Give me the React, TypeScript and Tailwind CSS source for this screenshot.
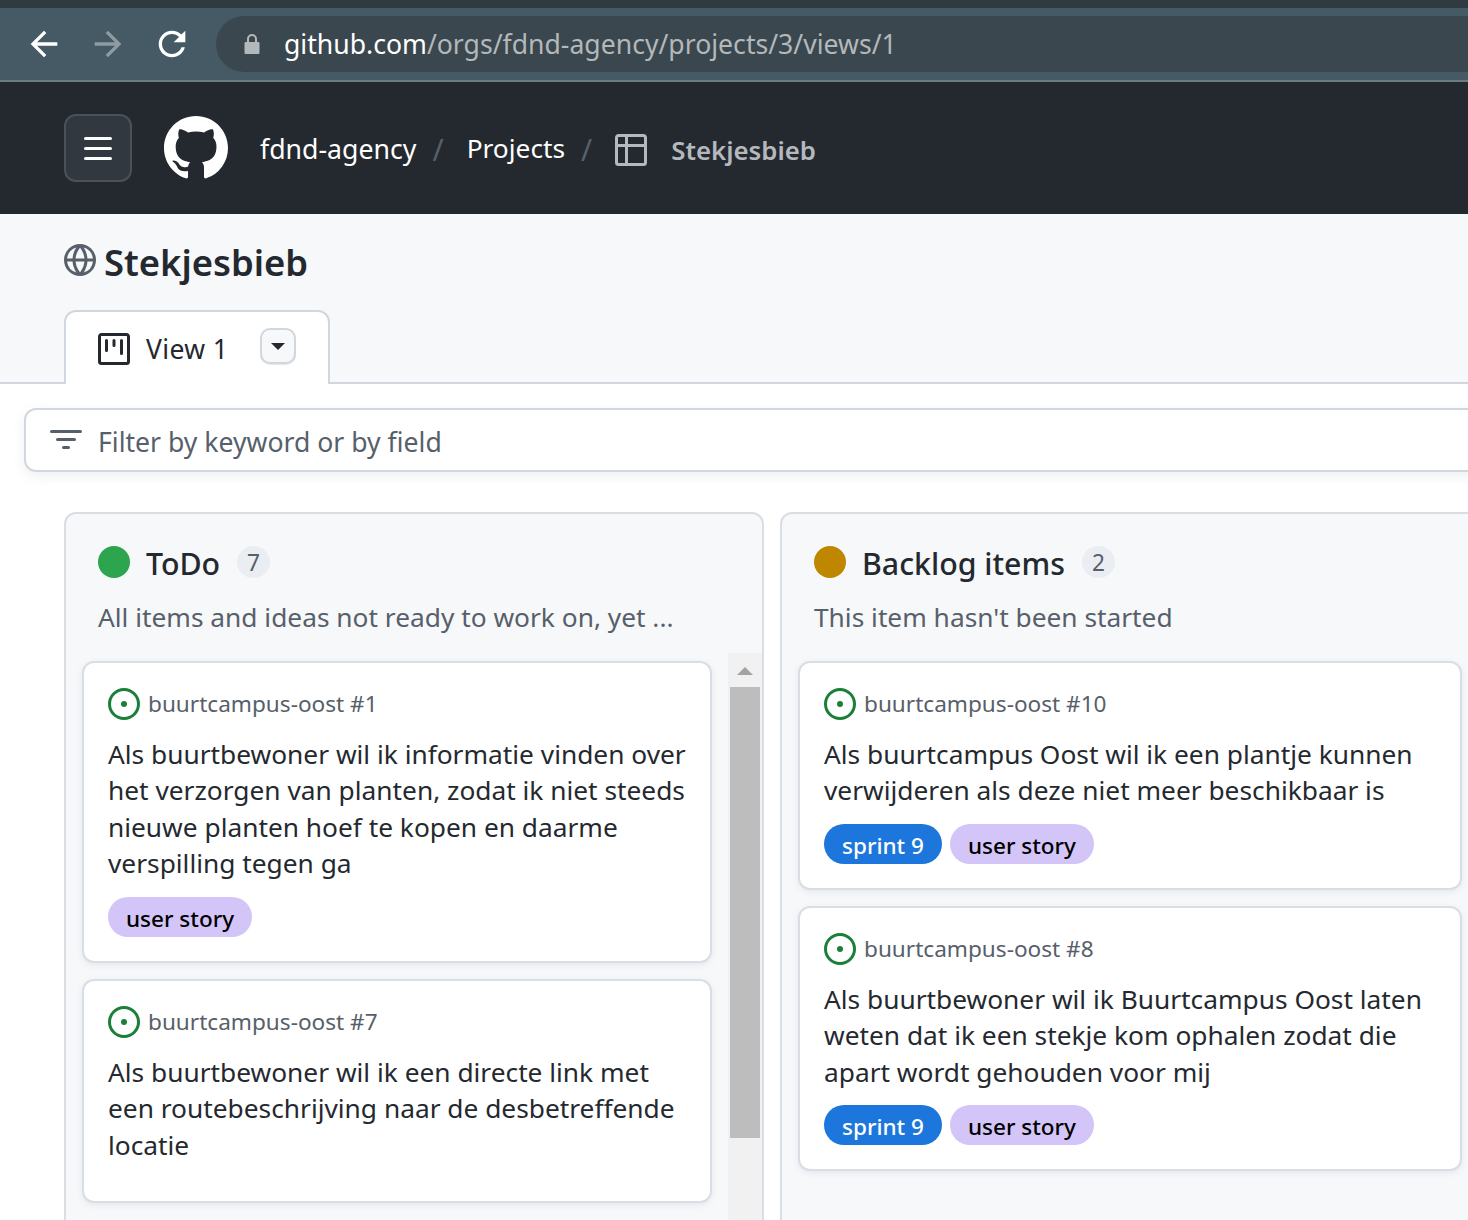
import React from 'react';

const FONT = "font-['Noto_Sans','Open_Sans',sans-serif]";

const GithubMark = () => (
    <svg viewBox="0 0 16 16" className="w-16 h-16" fill="#ffffff">
        <path d="M8 0C3.58 0 0 3.58 0 8c0 3.54 2.29 6.53 5.47 7.59.4.07.55-.17.55-.38 0-.19-.01-.82-.01-1.49-2.01.37-2.53-.49-2.69-.94-.09-.23-.48-.94-.82-1.13-.28-.15-.68-.52-.01-.53.63-.01 1.08.58 1.23.82.72 1.21 1.87.87 2.33.66.07-.52.28-.87.51-1.07-1.78-.2-3.64-.89-3.64-3.95 0-.87.31-1.59.82-2.15-.08-.2-.36-1.02.08-2.12 0 0 .67-.21 2.2.82.64-.18 1.32-.27 2-.27.68 0 1.36.09 2 .27 1.53-1.04 2.2-.82 2.2-.82.44 1.1.16 1.92.08 2.12.51.56.82 1.27.82 2.15 0 3.07-1.87 3.75-3.65 3.95.29.25.54.73.54 1.48 0 1.07-.01 1.93-.01 2.2 0 .21.15.46.55.38A8.013 8.013 0 0016 8c0-4.42-3.58-8-8-8z" />
    </svg>
);

const BackIcon = () => (
    <svg viewBox="0 0 24 24" className="w-10 h-10" fill="#ffffff">
        <path d="M20 11H7.83l5.59-5.59L12 4l-8 8 8 8 1.41-1.41L7.83 13H20v-2z" />
    </svg>
);

const ForwardIcon = () => (
    <svg viewBox="0 0 24 24" className="w-10 h-10" fill="#8f9ca3">
        <path d="M12 4l-1.41 1.41L16.17 11H4v2h12.17l-5.58 5.59L12 20l8-8z" />
    </svg>
);

const ReloadIcon = () => (
    <svg viewBox="0 0 24 24" className="w-10 h-10" fill="#ffffff">
        <path d="M17.65 6.35C16.2 4.9 14.21 4 12 4c-4.42 0-7.99 3.58-7.99 8s3.57 8 7.99 8c3.73 0 6.84-2.55 7.73-6h-2.08c-.82 2.33-3.04 4-5.65 4-3.31 0-6-2.69-6-6s2.69-6 6-6c1.66 0 3.14.69 4.22 1.78L13 11h7V4l-2.35 2.35z" />
    </svg>
);

const TableIcon = () => (
    <svg viewBox="0 0 16 16" className="w-8 h-8" fill="#b5b9bd">
        <path d="M0 1.75C0 .784.784 0 1.75 0h12.5C15.216 0 16 .784 16 1.750v12.5A1.75 1.75 0 0 1 14.25 16H1.750A1.75 1.75 0 0 1 0 14.25ZM1.5 6.500v7.750c0 .138.112.25.25.25H5V6.500Zm5 0v8h7.750a.25.25 0 0 0 .25-.25V6.500Zm8-1.500V1.750a.25.25 0 0 0-.25-.25H6.500V5ZM5 5V1.500H1.750a.25.25 0 0 0-.25.25V5Z" />
    </svg>
);

const GlobeIcon = () => (
    <svg viewBox="0 0 16 16" className="w-8 h-8" fill="#57606a">
        <path d="M8 0a8 8 0 1 1 0 16A8 8 0 0 1 8 0ZM5.78 8.75a9.64 9.64 0 0 0 1.363 4.177c.255.426.542.832.857 1.215.245-.296.551-.705.857-1.215A9.64 9.64 0 0 0 10.22 8.75Zm4.44-1.5a9.64 9.64 0 0 0-1.363-4.177c-.307-.51-.612-.919-.857-1.215a9.927 9.927 0 0 0-.857 1.215A9.64 9.64 0 0 0 5.78 7.25Zm-5.944 1.5H1.543a6.507 6.507 0 0 0 4.666 5.5c-.123-.181-.24-.365-.352-.552-.715-1.192-1.437-2.874-1.581-4.948Zm-2.733-1.5h2.733c.144-2.074.866-3.756 1.58-4.948.12-.197.237-.381.353-.552a6.507 6.507 0 0 0-4.666 5.5Zm10.181 1.5c-.144 2.074-.866 3.756-1.58 4.948-.12.197-.237.381-.353.552a6.507 6.507 0 0 0 4.666-5.5Zm2.733-1.5a6.507 6.507 0 0 0-4.666-5.5c.123.181.24.365.353.552.714 1.192 1.436 2.874 1.58 4.948Z" />
    </svg>
);

const BoardIcon = () => (
    <svg viewBox="0 0 16 16" className="w-8 h-8" fill="#24292f">
        <path d="M1.75 0h12.5C15.216 0 16 .784 16 1.75v12.5A1.75 1.75 0 0 1 14.25 16H1.75A1.75 1.75 0 0 1 0 14.25V1.75C0 .784.784 0 1.75 0ZM1.5 1.75v12.5c0 .138.112.25.25.25h12.5a.25.25 0 0 0 .25-.25V1.75a.25.25 0 0 0-.25-.25H1.75a.25.25 0 0 0-.25.25ZM11.75 3a.75.75 0 0 1 .75.75v6.5a.75.75 0 0 1-1.5 0v-6.5a.75.75 0 0 1 .75-.75Zm-8.25.75a.75.75 0 0 1 1.5 0v5a.75.75 0 0 1-1.5 0ZM8 3a.75.75 0 0 1 .75.75v2.5a.75.75 0 0 1-1.5 0v-2.5A.75.75 0 0 1 8 3Z" />
    </svg>
);

const FilterIcon = () => (
    <svg viewBox="0 0 16 16" className="w-8 h-8" fill="#57606a">
        <path d="M.75 3h14.5a.75.75 0 0 1 0 1.5H.75a.75.75 0 0 1 0-1.5ZM3 7.75A.75.75 0 0 1 3.75 7h8.5a.75.75 0 0 1 0 1.5h-8.5A.75.75 0 0 1 3 7.75Zm3 4a.75.75 0 0 1 .75-.75h2.5a.75.75 0 0 1 0 1.5h-2.5a.75.75 0 0 1-.75-.75Z" />
    </svg>
);

const IssueIcon = () => (
    <svg viewBox="0 0 16 16" className="w-8 h-8 shrink-0" fill="#1a7f37">
        <path d="M8 9.5a1.5 1.5 0 1 0 0-3 1.5 1.5 0 0 0 0 3Z" />
        <path d="M8 0a8 8 0 1 1 0 16A8 8 0 0 1 8 0ZM1.5 8a6.5 6.5 0 1 0 13 0 6.5 6.5 0 0 0-13 0Z" />
    </svg>
);

const Tag = ({ label, blue }: { label: string; blue?: boolean }) => (
    <span className={`h-10 px-[18px] pt-1 flex items-center rounded-full text-[22.5px] font-medium ${blue ? 'bg-[#1d76db] text-white' : 'bg-[#d4c5f9] text-black'}`}>
        {label}
    </span>
);

const Card = ({ repo, text, tags, extra }: { repo: string; text: string[]; tags?: { label: string; blue?: boolean }[]; extra?: string }) => (
    <div className={`bg-white border-2 border-[#d8dee4] rounded-xl pl-6 pr-4 pt-[25px] shadow-[0_2px_6px_rgba(140,149,159,0.15)] ${extra ?? ''}`}>
        <div className="flex items-center gap-2 h-8">
            <IssueIcon />
            <span className="text-[22.6px] text-[#57606a]">{repo}</span>
        </div>
        <div className="mt-4 text-[26.3px] leading-[36.4px] text-[#24292f]">
            {text.map((line) => (
                <div key={line} className="whitespace-nowrap">{line}</div>
            ))}
        </div>
        {tags && (
            <div className="flex gap-2 mt-[15px]">
                {tags.map((t) => (
                    <Tag key={t.label} label={t.label} blue={t.blue} />
                ))}
            </div>
        )}
    </div>
);

const ColumnHead = ({ color, title, count, sub }: { color: string; title: string; count: number; sub: string }) => (
    <div className="pl-8 pt-8">
        <div className="flex items-center h-8">
            <span className="w-8 h-8 rounded-full" style={{ backgroundColor: color }} />
            <span className="ml-4 pt-1 text-[30.3px] font-medium text-[#24292f]">{title}</span>
            <span className="ml-[17px] w-[33px] h-8 pt-[2px] rounded-full bg-[#eaeef2] flex items-center justify-center text-[22.7px] text-[#57606a]">{count}</span>
        </div>
        <div className="mt-[21px] text-[26.3px] leading-9 text-[#57606a] whitespace-nowrap">{sub}</div>
    </div>
);

export default function App() {
    return (
        <div className={`w-[1468px] h-[1220px] overflow-hidden bg-white ${FONT}`}>
            {/* Browser chrome */}
            <div className="h-2 bg-[#2f3a41]" />
            <div className="h-[74px] bg-[#455a64] border-b-2 border-[#6b7c85] flex items-start">
                <div className="flex items-center gap-6 pl-[24px] h-[72px]">
                    <BackIcon />
                    <ForwardIcon />
                    <ReloadIcon />
                </div>
                <div className="ml-6 mt-2 h-14 flex-1 rounded-l-full bg-[#3b474e] flex items-center pl-7">
                    <svg viewBox="0 0 16 20" className="w-4 h-5" fill="#b3b8bb">
                        <path d="M3 8V5a5 5 0 0 1 10 0v3h1.2c.7 0 1.3.6 1.3 1.3v9.4c0 .7-.6 1.3-1.3 1.3H1.800c-.7 0-1.300-.6-1.300-1.300V9.300C.5 8.600 1.100 8 1.800 8H3Zm2 0h6V5a3 3 0 0 0-6 0v3Z" />
                    </svg>
                    <span className="ml-6 pt-[2px] text-[26.6px]">
                        <span className="text-white">github.com</span>
                        <span className="text-[#b3b8bb]">/orgs/fdnd-agency/projects/3/views/1</span>
                    </span>
                </div>
            </div>

            {/* GitHub header */}
            <div className="h-[132px] bg-[#24292f] flex items-center pl-16">
                <div className="w-[68px] h-[68px] rounded-xl bg-[#32383f] border-2 border-[#4b5159] flex flex-col items-center justify-center gap-[7px]">
                    <span className="w-7 h-[3px] bg-white rounded" />
                    <span className="w-7 h-[3px] bg-white rounded" />
                    <span className="w-7 h-[3px] bg-white rounded" />
                </div>
                <div className="ml-8">
                    <GithubMark />
                </div>
                <span className="ml-8 pt-[2px] text-[26.7px] text-white">fdnd-agency</span>
                <span className="ml-4 pt-[2px] text-[30px] text-[#57606a]">/</span>
                <span className="ml-[23px] pt-[2px] text-[26.3px] text-white">Projects</span>
                <span className="ml-4 pt-[2px] text-[30px] text-[#57606a]">/</span>
                <span className="ml-[23px] pt-1"><TableIcon /></span>
                <span className="ml-6 pt-1 text-[25.8px] font-semibold text-[#b5b9bd]">Stekjesbieb</span>
            </div>

            {/* Project title + tabs */}
            <div className="h-[170px] bg-[#f6f8fa] border-b-2 border-[#d0d7de] pl-16 flex flex-col justify-between">
                <div className="flex items-start gap-2 pt-[21px]">
                    <span className="mt-[9px]"><GlobeIcon /></span>
                    <span className="mt-[2px] text-[36.4px] leading-[50px] font-semibold text-[#24292f]">Stekjesbieb</span>
                </div>
                <div className="w-[266px] h-[74px] -mb-[2px] bg-white border-2 border-b-0 border-[#d0d7de] rounded-t-xl flex items-start pl-8 pt-[21px]">
                    <BoardIcon />
                    <span className="ml-4 text-[26.5px] tracking-[0.4px] leading-8 text-[#24292f]">View 1</span>
                    <span className="ml-8 -mt-[5px] w-9 h-9 rounded-[10px] bg-[#f6f8fa] border-2 border-[#d0d7de] flex items-center justify-center shadow-[0_1px_0_rgba(31,35,40,0.1)]">
                        <span className="w-0 h-0 border-x-[7px] border-x-transparent border-t-[7px] border-t-[#24292f]" />
                    </span>
                </div>
            </div>

            {/* Filter bar */}
            <div className="pl-6 pt-[24px]">
                <div className="w-[1500px] h-[64px] bg-white border-2 border-[#d0d7de] rounded-xl flex items-center pl-[24px] shadow-[0_4px_12px_rgba(140,149,159,0.15)]">
                    <FilterIcon />
                    <span className="ml-4 pt-[6px] text-[26.6px] text-[#57606a]">Filter by keyword or by field</span>
                </div>
            </div>

            {/* Board */}
            <div className="flex gap-4 pl-16 pt-[40px]">
                <div className="w-[700px] h-[720px] shrink-0 bg-[#f6f8fa] border-2 border-[#d8dee4] rounded-xl">
                    <ColumnHead color="#2da44e" title="ToDo" count={7} sub="All items and ideas not ready to work on, yet ..." />
                    <div className="flex mt-[18px] pl-4 gap-4">
                        <div className="w-[630px] flex flex-col gap-4 pt-2">
                            <Card
                                repo="buurtcampus-oost #1"
                                text={[
                                    'Als buurtbewoner wil ik informatie vinden over',
                                    'het verzorgen van planten, zodat ik niet steeds',
                                    'nieuwe planten hoef te kopen en daarme',
                                    'verspilling tegen ga',
                                ]}
                                tags={[{ label: 'user story' }]}
                                extra="h-[302px]"
                            />
                            <Card
                                repo="buurtcampus-oost #7"
                                text={[
                                    'Als buurtbewoner wil ik een directe link met',
                                    'een routebeschrijving naar de desbetreffende',
                                    'locatie',
                                ]}
                                extra="h-[224px]"
                            />
                        </div>
                        <div className="w-[34px] h-[600px] bg-[#f1f1f1] flex flex-col items-center">
                            <span className="mt-[14px] w-0 h-0 border-x-[8px] border-x-transparent border-b-[8px] border-b-[#a3a3a3]" />
                            <span className="mt-[12px] w-[30px] h-[451px] bg-[#bdbdbd]" />
                        </div>
                    </div>
                </div>

                <div className="w-[700px] h-[720px] shrink-0 bg-[#f6f8fa] border-2 border-[#d8dee4] rounded-xl">
                    <ColumnHead color="#bf8700" title="Backlog items" count={2} sub="This item hasn't been started" />
                    <div className="mt-[18px] pl-4 pt-2 flex flex-col gap-4 w-[680px]">
                        <Card
                            repo="buurtcampus-oost #10"
                            text={[
                                'Als buurtcampus Oost wil ik een plantje kunnen',
                                'verwijderen als deze niet meer beschikbaar is',
                            ]}
                            tags={[{ label: 'sprint 9', blue: true }, { label: 'user story' }]}
                            extra="h-[229px]"
                        />
                        <Card
                            repo="buurtcampus-oost #8"
                            text={[
                                'Als buurtbewoner wil ik Buurtcampus Oost laten',
                                'weten dat ik een stekje kom ophalen zodat die',
                                'apart wordt gehouden voor mij',
                            ]}
                            tags={[{ label: 'sprint 9', blue: true }, { label: 'user story' }]}
                            extra="h-[265px]"
                        />
                    </div>
                </div>
            </div>
        </div>
    );
}
